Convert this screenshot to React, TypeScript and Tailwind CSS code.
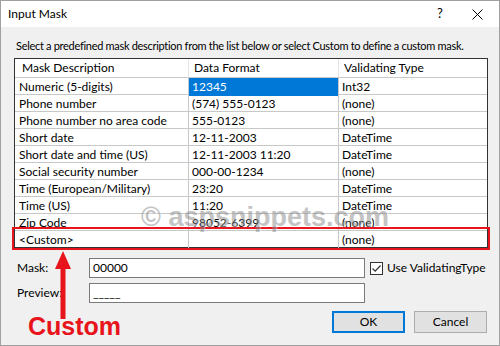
import React from "react";

const ROWS = [
  ["Numeric (5-digits)", "12345", "Int32"],
  ["Phone number", "(574) 555-0123", "(none)"],
  ["Phone number no area code", "555-0123", "(none)"],
  ["Short date", "12-11-2003", "DateTime"],
  ["Short date and time (US)", "12-11-2003 11:20", "DateTime"],
  ["Social security number", "000-00-1234", "(none)"],
  ["Time (European/Military)", "23:20", "DateTime"],
  ["Time (US)", "11:20", "DateTime"],
  ["Zip Code", "98052-6399", "(none)"],
  ["<Custom>", "", "(none)"],
];

const font = { fontFamily: 'Lato, "Noto Sans", sans-serif' };

export default function App() {
  return (
    <div className="relative w-[500px] h-[346px] bg-[#f0f0f0] border border-[#a0a0a0] overflow-hidden text-[12px] text-black whitespace-nowrap" style={font}>
      {/* title bar */}
      <div className="h-[26px] bg-white flex items-center pl-[7px]">
        <span className="text-[12px]">Input Mask</span>
        <span className="ml-auto w-[30px] text-center text-[13px]">?</span>
        <span className="w-[44px] flex justify-center">
          <svg width="11" height="11" viewBox="0 0 11 11"><path d="M0.5 0.5L10.5 10.5M10.5 0.5L0.5 10.5" stroke="#000" strokeWidth="1" /></svg>
        </span>
      </div>

      <div className="pl-[15px] pt-[11px] leading-[16px] text-[11px] tracking-[-0.3px]">
        Select a predefined mask description from the list below or select Custom to define a custom mask.
      </div>

      {/* grid */}
      <div className="ml-[13px] mt-[4px] w-[474px] border border-[#333] bg-white">
        <div className="grid grid-cols-[173px_150px_149px] h-[18px] items-center">
          <div className="pl-[7px]">Mask Description</div>
          <div className="pl-[5px] border-l border-[#e5e5e5] h-full flex items-center">Data Format</div>
          <div className="pl-[5px] border-l border-[#e5e5e5] h-full flex items-center">Validating Type</div>
        </div>
        {ROWS.map((r, i) => (
          <div key={r[0]} className={`grid grid-cols-[173px_150px_149px] h-[17px] border-t border-[#c8c8c8] ${i === 9 ? "outline-2 outline-offset-1 outline-[#e8141b]" : ""}`}>
            <div className="pl-[4px] flex items-center">{r[0]}</div>
            <div className={`pl-[3px] flex items-center border-l border-[#c8c8c8] ${i === 0 ? "bg-[#0078d7] text-white" : ""}`}>{r[1]}</div>
            <div className="pl-[3px] flex items-center border-l border-[#c8c8c8]">{r[2]}</div>
          </div>
        ))}
      </div>

      {/* mask / preview */}
      <div className="mt-[10px] flex items-center">
        <span className="pl-[16px] w-[88px]">Mask:</span>
        <div className="w-[276px] h-[20px] bg-white border border-[#7a7a7a] flex items-center pl-[3px]">00000</div>
        <span className="ml-[5px] w-[13px] h-[13px] border border-[#333] bg-white flex items-center justify-center">
          <svg width="11" height="11" viewBox="0 0 11 11"><path d="M1.5 5.5L4.2 8.2L9.5 2.5" stroke="#333" strokeWidth="1.2" fill="none" /></svg>
        </span>
        <span className="ml-[4px]">Use ValidatingType</span>
      </div>
      <div className="mt-[5px] flex items-center">
        <span className="pl-[16px] w-[88px]">Preview:</span>
        <div className="w-[276px] h-[20px] bg-white border border-[#7a7a7a] flex items-center pl-[3px]">_____</div>
      </div>

      {/* buttons */}
      <div className="mt-[8px] flex justify-end pr-[12px] gap-[9px]">
        <button className="w-[73px] h-[22px] bg-[#e1e1e1] border-2 border-[#0078d7] text-[12px]">OK</button>
        <button className="w-[73px] h-[22px] bg-[#e1e1e1] border border-[#adadad] text-[12px]">Cancel</button>
      </div>

      {/* annotation */}
      <svg className="absolute left-[51px] top-[250px]" width="22" height="68" viewBox="0 0 22 68">
        <path d="M11 0L19 18H13.5V68H8.5V18H3Z" fill="#e8141b" />
      </svg>
      <div className="absolute left-[27px] top-[313px] text-[25px] font-bold text-[#e8141b] leading-none" style={{ fontFamily: '"Liberation Sans", Arial, sans-serif' }}>
        Custom
      </div>

      {/* watermark */}
      <div
        className="absolute left-[140px] top-[203px] text-[27px] font-bold text-[#8a8a8a] opacity-50 leading-none pointer-events-none"
        style={{ fontFamily: '"Liberation Sans", Arial, sans-serif', textShadow: "1px 1px 1px #fff" }}
      >
        © aspsnippets.com
      </div>
    </div>
  );
}
